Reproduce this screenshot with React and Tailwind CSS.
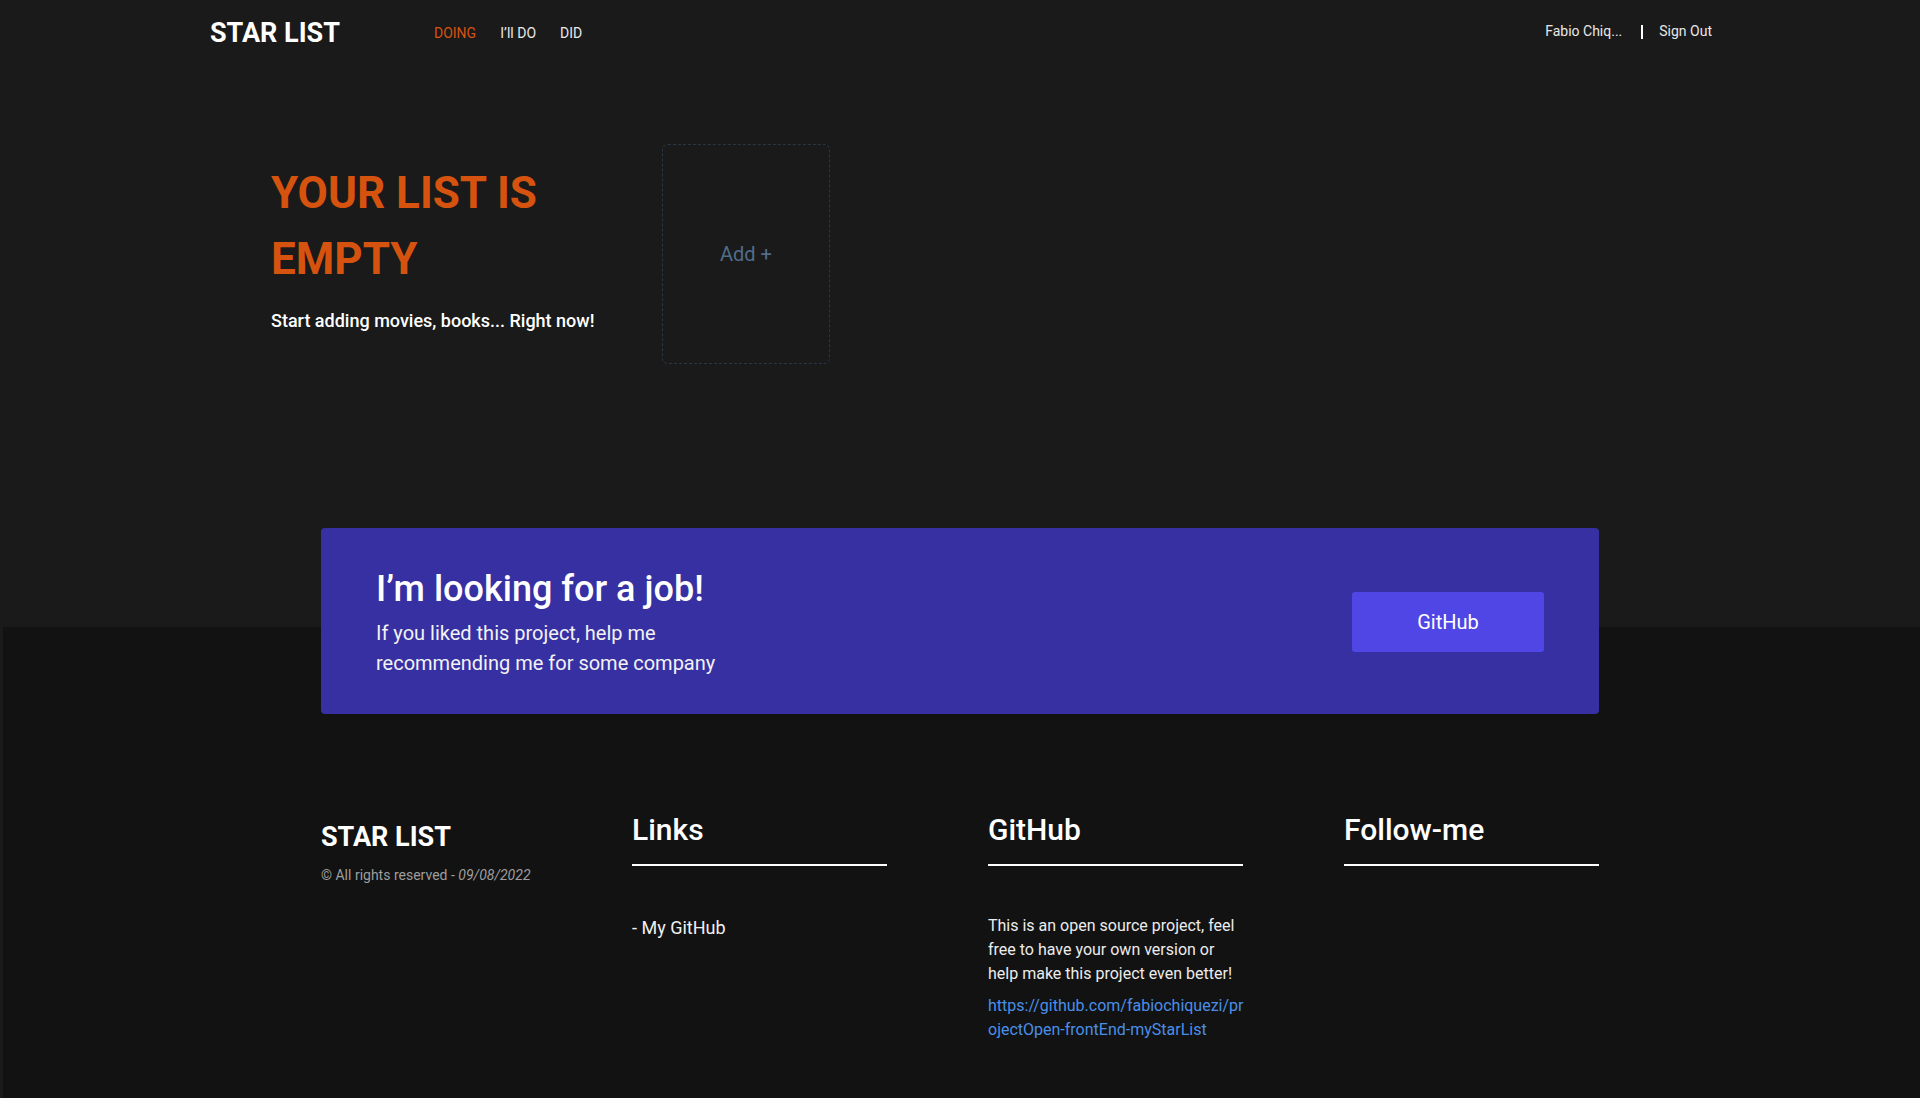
export default function App() {
  return (
    <div className="min-h-screen flex flex-col bg-[#1a1a1a] font-[Roboto,sans-serif] text-white">
      <div className="h-[627px] shrink-0">
        <header className="h-[66px] flex items-center pl-[210px] pr-[208px]">
          <div className="text-[27px] font-bold leading-[27px]">STAR LIST</div>
          <nav className="ml-[94px] flex gap-6 text-[14px]">
            <a href="#" className="text-[#d6530f]">DOING</a>
            <a href="#" className="text-[#e8e8e8]">I’ll DO</a>
            <a href="#" className="text-[#e8e8e8]">DID</a>
          </nav>
          <div className="ml-auto -mt-[3px] flex items-center text-[14px] text-[#e8e8e8]">
            <span>Fabio Chiq...</span>
            <span className="ml-[19px] w-[2px] h-[14px] bg-white"></span>
            <a href="#" className="ml-[16px]">Sign Out</a>
          </div>
        </header>

        <section className="flex items-start pl-[271px] pt-[78px]">
          <div className="w-[340px] mt-[16px]">
            <h1 className="text-[44px] leading-[66px] font-bold text-[#d6530f]">YOUR LIST IS EMPTY</h1>
            <p className="mt-[15px] text-[18px] leading-[27px] font-medium text-white">
              Start adding movies, books... Right now!
            </p>
          </div>
          <button className="ml-[51px] w-[168px] h-[220px] border border-dashed border-[#283647] rounded-[6px] text-[20px] text-[#516d8a] flex items-center justify-center">
            Add +
          </button>
        </section>
      </div>

      <footer className="flex-1 bg-[#121212] shadow-[inset_3px_0_0_#1a1a1a] pb-[50px]">
        <div className="-mt-[99px] mx-auto w-[1278px] h-[186px] bg-[#3730a3] rounded-[4px] flex items-center justify-between pl-[55px] pr-[55px]">
          <div className="mt-[3px]">
            <h2 className="text-[36px] leading-[43px] font-medium">I’m looking for a job!</h2>
            <p className="mt-[7px] w-[345px] text-[20px] leading-[30px] text-[#f2f2f2]">
              If you liked this project, help me recommending me for some company
            </p>
          </div>
          <button className="mt-[2px] w-[192px] h-[60px] bg-[#4f46e5] rounded-[3px] text-[20px] text-white">
            GitHub
          </button>
        </div>

        <div className="mx-auto w-[1278px] mt-[98px] flex gap-[101px]">
          <div className="w-[210px] mt-[10px]">
            <div className="text-[27px] font-bold leading-[31px]">STAR LIST</div>
            <p className="mt-[12px] text-[14px] text-[#9e9e9e] whitespace-nowrap">
              © All rights reserved - <i>09/08/2022</i>
            </p>
          </div>

          <div className="w-[255px]">
            <h3 className="text-[30px] font-medium leading-[35px] pb-[17px] border-b-2 border-white">Links</h3>
            <a href="#" className="block mt-[48px] text-[18px] leading-[27px] text-[#f0f0f0]">- My GitHub</a>
          </div>

          <div className="w-[255px]">
            <h3 className="text-[30px] font-medium leading-[35px] pb-[17px] border-b-2 border-white">GitHub</h3>
            <p className="mt-[48px] text-[16px] leading-[24px] text-[#ececec]">
              This is an open source project, feel free to have your own version or help make this project even better!
            </p>
            <a href="#" className="block mt-[8px] w-[262px] text-[16px] leading-[24px] text-[#4a8fe7] break-all">
              https://github.com/fabiochiquezi/projectOpen-frontEnd-myStarList
            </a>
          </div>

          <div className="w-[255px]">
            <h3 className="text-[30px] font-medium leading-[35px] pb-[17px] border-b-2 border-white">Follow-me</h3>
          </div>
        </div>
      </footer>
    </div>
  );
}
